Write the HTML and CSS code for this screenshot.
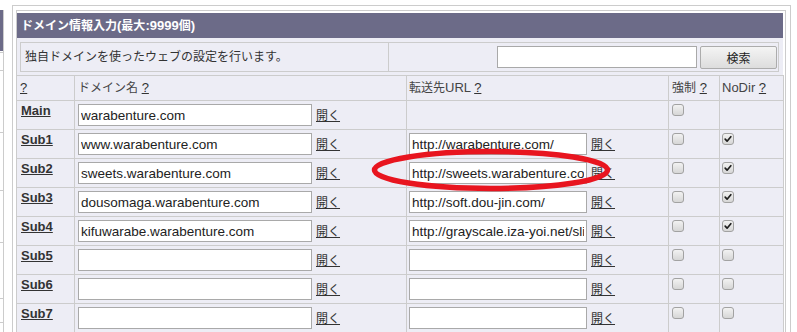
FILE: index.html
```html
<!DOCTYPE html>
<html lang="ja">
<head>
<meta charset="utf-8">
<title>ドメイン情報入力</title>
<link rel="stylesheet" href="styles.css">
</head>
<body>
<div class="page">
  <div class="side">
    <div class="side-head"></div>
    <div class="side-line s1"></div>
    <div class="side-line s2"></div>
    <div class="side-line s3"></div>
    <div class="side-line s4"></div>
    <div class="side-line s5"></div>
    <div class="side-line s6"></div>
    <div class="side-line s7"></div>
  </div>
  <div class="outer">
    <div class="inner">
      <div class="title"><span class="j">ドメイン情報入力</span>(<span class="j">最大</span>:9999<span class="j">個</span>)</div>
      <div class="desc-wrap">
        <div class="desc">
          <div class="desc-text">独自ドメインを使ったウェブの設定を行います。</div>
          <div class="desc-search">
            <input class="search-input" type="text" value="">
            <button class="btn" type="button">検索</button>
          </div>
        </div>
      </div>
      <table class="grid">
        <colgroup>
          <col class="c1"><col class="c2"><col class="c3"><col class="c4"><col class="c5">
        </colgroup>
        <tr class="hrow">
          <th><div class="h"><a href="#" class="q">?</a></div></th>
          <th><div class="h"><span class="j">ドメイン名</span> <a href="#" class="q">?</a></div></th>
          <th class="p2"><div class="h"><span class="j">転送先</span>URL <a href="#" class="q">?</a></div></th>
          <th><div class="h"><span class="j">強制</span> <a href="#" class="q">?</a></div></th>
          <th class="p2"><div class="h">NoDir <a href="#" class="q">?</a></div></th>
        </tr>
        <tr>
          <td class="lbl"><a href="#">Main</a></td>
          <td><div class="fld"><input class="in dom" type="text" value="warabenture.com"><a href="#" class="open">開く</a></div></td>
          <td class="p2"></td>
          <td><span class="cb"></span></td>
          <td class="p2"></td>
        </tr>
        <tr>
          <td class="lbl"><a href="#">Sub1</a></td>
          <td><div class="fld"><input class="in dom" type="text" value="www.warabenture.com"><a href="#" class="open">開く</a></div></td>
          <td class="p2"><div class="fld"><input class="in url" type="text" value="http://warabenture.com/"><a href="#" class="open">開く</a></div></td>
          <td><span class="cb"></span></td>
          <td class="p2"><span class="cb on"><svg viewBox="0 0 12 12"><path d="M2.6 6.2 L4.9 8.6 L9.4 3.2"/></svg></span></td>
        </tr>
        <tr>
          <td class="lbl"><a href="#">Sub2</a></td>
          <td><div class="fld"><input class="in dom" type="text" value="sweets.warabenture.com"><a href="#" class="open">開く</a></div></td>
          <td class="p2"><div class="fld"><input class="in url" type="text" value="http://sweets.warabenture.com/"><a href="#" class="open">開く</a></div></td>
          <td><span class="cb"></span></td>
          <td class="p2"><span class="cb on"><svg viewBox="0 0 12 12"><path d="M2.6 6.2 L4.9 8.6 L9.4 3.2"/></svg></span></td>
        </tr>
        <tr>
          <td class="lbl"><a href="#">Sub3</a></td>
          <td><div class="fld"><input class="in dom" type="text" value="dousomaga.warabenture.com"><a href="#" class="open">開く</a></div></td>
          <td class="p2"><div class="fld"><input class="in url" type="text" value="http://soft.dou-jin.com/"><a href="#" class="open">開く</a></div></td>
          <td><span class="cb"></span></td>
          <td class="p2"><span class="cb on"><svg viewBox="0 0 12 12"><path d="M2.6 6.2 L4.9 8.6 L9.4 3.2"/></svg></span></td>
        </tr>
        <tr>
          <td class="lbl"><a href="#">Sub4</a></td>
          <td><div class="fld"><input class="in dom" type="text" value="kifuwarabe.warabenture.com"><a href="#" class="open">開く</a></div></td>
          <td class="p2"><div class="fld"><input class="in url" type="text" value="http://grayscale.iza-yoi.net/slime/"><a href="#" class="open">開く</a></div></td>
          <td><span class="cb"></span></td>
          <td class="p2"><span class="cb on"><svg viewBox="0 0 12 12"><path d="M2.6 6.2 L4.9 8.6 L9.4 3.2"/></svg></span></td>
        </tr>
        <tr>
          <td class="lbl"><a href="#">Sub5</a></td>
          <td><div class="fld"><input class="in dom" type="text" value=""><a href="#" class="open">開く</a></div></td>
          <td class="p2"><div class="fld"><input class="in url" type="text" value=""><a href="#" class="open">開く</a></div></td>
          <td><span class="cb"></span></td>
          <td class="p2"><span class="cb"></span></td>
        </tr>
        <tr>
          <td class="lbl"><a href="#">Sub6</a></td>
          <td><div class="fld"><input class="in dom" type="text" value=""><a href="#" class="open">開く</a></div></td>
          <td class="p2"><div class="fld"><input class="in url" type="text" value=""><a href="#" class="open">開く</a></div></td>
          <td><span class="cb"></span></td>
          <td class="p2"><span class="cb"></span></td>
        </tr>
        <tr>
          <td class="lbl"><a href="#">Sub7</a></td>
          <td><div class="fld"><input class="in dom" type="text" value=""><a href="#" class="open">開く</a></div></td>
          <td class="p2"><div class="fld"><input class="in url" type="text" value=""><a href="#" class="open">開く</a></div></td>
          <td><span class="cb"></span></td>
          <td class="p2"><span class="cb"></span></td>
        </tr>
      </table>
    </div>
  </div>
  <svg class="mark" viewBox="0 0 250 52" width="250" height="52"><ellipse cx="123" cy="25" rx="116.5" ry="18.5"/></svg>
</div>
</body>
</html>
```

FILE: styles.css
```css
* { box-sizing: border-box; }
html, body { margin: 0; padding: 0; height: 100%; overflow: hidden; background: #fff; }
body { font-family: "Liberation Sans", "Noto Sans CJK JP", sans-serif; font-size: 13px; color: #333; }

.j { font-family: "Noto Sans CJK JP", sans-serif; font-size: 12px; line-height: 12px; }

.page { position: relative; display: flex; align-items: flex-start; }

.side { flex: none; width: 4px; height: 400px; margin-top: 10px; border-right: 1px solid #ccc; }
.side-head { height: 41px; background: #6c6b88; }
.side-line { border-bottom: 1px solid #ccc; }
.s1 { height: 2px; }
.s2 { height: 18px; }
.s3 { height: 62px; }
.s4 { height: 58px; }
.s5 { height: 52px; }
.s6 { height: 56px; }
.s7 { height: 24px; }

.outer { flex: none; width: 779px; height: 400px; margin: 5px 0 0 8px; border: 1px solid #ccc; border-bottom: 0; padding: 4px 4px 0 3px; }
.inner { height: 100%; border: 1px solid #ccc; border-bottom: 0; padding: 2px 2px 0 0; background: #fff; }

.title { height: 25px; line-height: 25px; padding-left: 4px; background: #6c6b88; color: #fff; font-weight: bold; font-size: 13px; white-space: nowrap; overflow: hidden; }

.desc-wrap { background: #ededf5; padding: 4px 4px 3px 3px; }
.desc { display: flex; height: 30px; border: 1px solid #ccc; }
.desc-text { width: 368px; border-right: 1px solid #ccc; padding: 4px 0 0 4px; font-family: "Noto Sans CJK JP", sans-serif; font-size: 12px; line-height: 18px; color: #333; white-space: nowrap; }
.desc-search { flex: 1; display: flex; justify-content: flex-end; align-items: flex-start; padding: 3px 1px 0 0; }
.search-input { width: 200px; height: 22px; margin: 0; border: 1px solid #a9a9a9; padding: 0 2px; background: #fff; font: 13px "Liberation Sans", sans-serif; }
.btn { width: 77px; height: 23px; margin: 0 0 0 3px; padding: 0; border: 1px solid #acacac; border-radius: 2px; background: linear-gradient(#f4f4f4, #dddddd); font-family: "Noto Sans CJK JP", sans-serif; font-size: 12px; color: #222; }

.grid { border-collapse: collapse; table-layout: fixed; width: 767px; margin-left: -1px; background: #ededf5; }
.c1 { width: 58px; }
.c2 { width: 332px; }
.c3 { width: 262px; }
.c4 { width: 51px; }
.c5 { width: 64px; }
.grid th, .grid td { border: 1px solid #ccc; padding: 3px; vertical-align: top; text-align: left; font-weight: normal; white-space: nowrap; overflow: hidden; }
.grid .p2 { padding-left: 2px; }
.h { height: 18px; line-height: 18px; color: #444; overflow: hidden; }
.q { color: #333; text-decoration: underline; }

.lbl { line-height: 14px; padding-left: 4px !important; }
.lbl a { color: #333; font-weight: bold; text-decoration: underline; }

.fld { display: flex; align-items: center; height: 22px; }
.in { flex: none; height: 22px; margin: 0; border: 1px solid #a9a9a9; padding: 0 2px; background: #fff; color: #222; font: 13.5px "Liberation Sans", sans-serif; outline: none; }
.dom { width: 234px; }
.url { width: 178px; }
.open { margin-left: 4px; color: #333; text-decoration: underline; font-family: "Noto Sans CJK JP", sans-serif; font-size: 12px; line-height: 14px; }

.cb { display: block; width: 12px; height: 12px; border: 1px solid #a2a2a2; border-radius: 3px; background: linear-gradient(#f2f2f2, #d6d6d6); }
.cb svg { display: block; width: 10px; height: 10px; }
.cb path { fill: none; stroke: #1e1e1e; stroke-width: 2; stroke-linecap: round; stroke-linejoin: round; }

.mark { position: absolute; left: 368px; top: 145px; overflow: visible; }
.mark ellipse { fill: none; stroke: #e8151f; stroke-width: 5.5; }
```
